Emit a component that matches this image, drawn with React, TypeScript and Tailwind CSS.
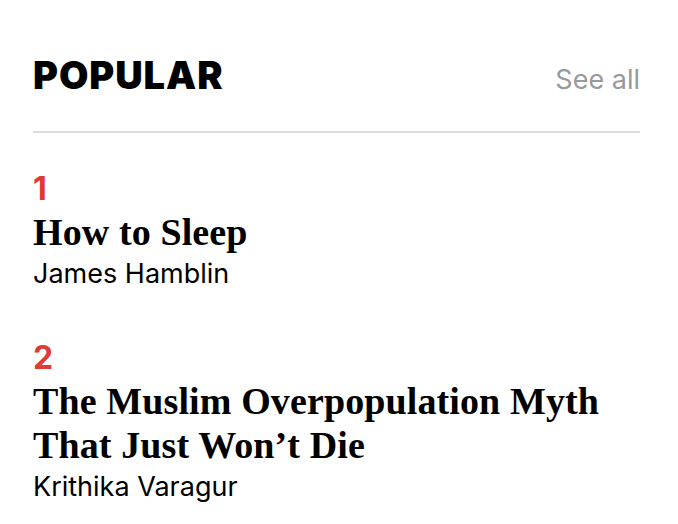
import React from "react";

// Popular list widget
const stories = [
  { rank: 1, title: "How to Sleep", author: "James Hamblin" },
  {
    rank: 2,
    title: "The Muslim Overpopulation Myth That Just Won’t Die",
    author: "Krithika Varagur",
  },
];

export default function App() {
  return (
    <div className="min-h-screen bg-white pl-[33px] pr-[38px] font-['Inter',sans-serif]">
      {/* Header */}
      <div className="flex items-baseline justify-between border-b-2 border-[#dcdcdc] pt-[52px] pb-[33px]">
        <h2 className="text-[38px] leading-[46px] font-black tracking-[0.025em] text-black">
          POPULAR
        </h2>
        <a href="#" className="text-[27px] leading-[30px] text-[#999999]">
          See all
        </a>
      </div>

      {/* Stories */}
      <ol className="pt-[40px]">
        {stories.map((s, i) => (
          <li key={s.rank} className={i > 0 ? "mt-[53px]" : ""}>
            <div className="text-[32px] leading-[32px] font-bold text-[#e03a37]">
              {s.rank}
            </div>
            <h3 className="mt-[5px] font-['Liberation_Serif',serif] text-[38px] leading-[44px] font-bold tracking-[0.003em] text-black">
              {s.title}
            </h3>
            <p className="mt-[5px] text-[27px] leading-[30px] text-black">{s.author}</p>
          </li>
        ))}
      </ol>
    </div>
  );
}
